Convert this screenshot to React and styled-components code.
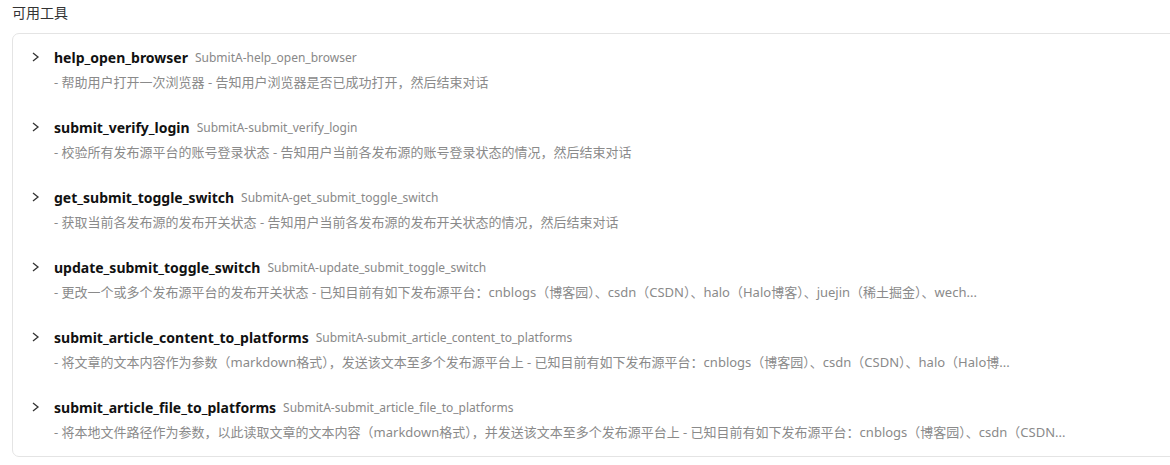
import React from "react";
import styled, { createGlobalStyle } from "styled-components";

const GlobalStyle = createGlobalStyle`
  html, body {
    margin: 0;
    padding: 0;
    background: #fff;
    overflow: hidden;
  }
  body {
    font-family: "Noto Sans", "Noto Sans CJK SC", sans-serif;
  }
`;

const Page = styled.div`
  padding: 4px 0 0 12px;
`;

const Heading = styled.div`
  font-size: 14px;
  line-height: 18px;
  color: #333;
  margin-bottom: 11px;
`;

const Card = styled.div`
  margin-right: -20px;
  border: 1px solid #e4e4e4;
  border-radius: 7px;
  padding: 13px 0 14px 18px;
  display: flex;
  flex-direction: column;
  gap: 25px;
`;

const Tool = styled.div`
  display: flex;
  flex-direction: column;
  gap: 5px;
`;

const TitleRow = styled.div`
  display: flex;
  align-items: center;
  height: 20px;
`;

const Chevron = styled.svg`
  width: 9px;
  height: 10px;
  margin-right: 14px;
  flex: none;
`;

const Name = styled.span`
  font-size: 14px;
  font-weight: 700;
  color: #111;
  margin-right: 7px;
`;

const Id = styled.span`
  font-size: 12px;
  color: #888;
`;

const Desc = styled.div`
  margin-left: 23px;
  font-size: 13px;
  line-height: 20px;
  color: #8a8a8a;
  white-space: nowrap;
`;

const tools = [
  {
    name: "help_open_browser",
    desc: "- 帮助用户打开一次浏览器 - 告知用户浏览器是否已成功打开，然后结束对话",
  },
  {
    name: "submit_verify_login",
    desc: "- 校验所有发布源平台的账号登录状态 - 告知用户当前各发布源的账号登录状态的情况，然后结束对话",
  },
  {
    name: "get_submit_toggle_switch",
    desc: "- 获取当前各发布源的发布开关状态 - 告知用户当前各发布源的发布开关状态的情况，然后结束对话",
  },
  {
    name: "update_submit_toggle_switch",
    desc: "- 更改一个或多个发布源平台的发布开关状态 - 已知目前有如下发布源平台：cnblogs（博客园）、csdn（CSDN）、halo（Halo博客）、juejin（稀土掘金）、wech...",
  },
  {
    name: "submit_article_content_to_platforms",
    desc: "- 将文章的文本内容作为参数（markdown格式），发送该文本至多个发布源平台上 - 已知目前有如下发布源平台：cnblogs（博客园）、csdn（CSDN）、halo（Halo博...",
  },
  {
    name: "submit_article_file_to_platforms",
    desc: "- 将本地文件路径作为参数，以此读取文章的文本内容（markdown格式），并发送该文本至多个发布源平台上 - 已知目前有如下发布源平台：cnblogs（博客园）、csdn（CSDN...",
  },
];

export default function App() {
  return (
    <Page>
      <GlobalStyle />
      <Heading>可用工具</Heading>
      <Card>
        {tools.map((t) => (
          <Tool key={t.name}>
            <TitleRow>
              <Chevron viewBox="0 0 9 10">
                <polyline points="2,1 7,5 2,9" fill="none" stroke="#333" strokeWidth="1.3" />
              </Chevron>
              <Name>{t.name}</Name>
              <Id>SubmitA-{t.name}</Id>
            </TitleRow>
            <Desc>{t.desc}</Desc>
          </Tool>
        ))}
      </Card>
    </Page>
  );
}
